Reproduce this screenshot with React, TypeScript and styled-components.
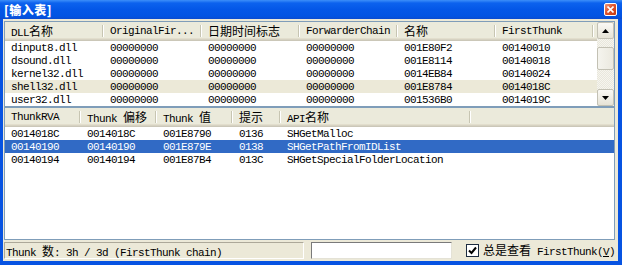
import React from 'react';
import styled, { createGlobalStyle } from 'styled-components';

const GlobalStyle = createGlobalStyle`
  html, body {
    margin: 0;
    padding: 0;
    background: #fff;
  }
  body {
    font-family: "Liberation Mono", "DejaVu Sans Mono", monospace;
    font-size: 11px;
    letter-spacing: -0.6px;
    color: #000;
  }
`;

const Window = styled.div`
  width: 622px;
  height: 265px;
  display: flex;
  flex-direction: column;
  background: #0753e2;
  overflow: hidden;
`;

const TitleBar = styled.div`
  height: 19px;
  flex: none;
  display: flex;
  align-items: center;
  justify-content: space-between;
  padding: 0 5px 0 4px;
  background: linear-gradient(
    to bottom,
    #3d8ff9 0%,
    #0c62ee 16%,
    #0457e7 50%,
    #0254e3 85%,
    #0a4bd0 100%
  );
`;

const Title = styled.span`
  font-family: "Noto Sans CJK SC", sans-serif;
  font-weight: 900;
  font-size: 12px;
  letter-spacing: 0.5px;
  color: #fff;
  line-height: 19px;
`;

const CloseButton = styled.div`
  width: 13px;
  height: 13px;
  box-sizing: border-box;
  border: 1px solid #fff;
  border-radius: 2px;
  background: linear-gradient(135deg, #f19a7c 0%, #e0542d 45%, #c43a12 100%);
  display: flex;
  align-items: center;
  justify-content: center;
`;

const Client = styled.div`
  flex: 1;
  min-height: 0;
  margin: 0 4px 4px 3px;
  padding: 2px 3px 0 1px;
  background: #ece9d8;
  display: flex;
  flex-direction: column;
`;

const Pane = styled.div<{ $height?: number }>`
  box-sizing: border-box;
  border: 1px solid #7f9db9;
  background: #fff;
  display: flex;
  ${p => (p.$height ? `height: ${p.$height}px; flex: none;` : 'flex: 1; min-height: 0;')}
`;

const ListArea = styled.div`
  flex: 1;
  min-width: 0;
  display: flex;
  flex-direction: column;
  overflow: hidden;
`;

const HeaderRow = styled.div<{ $cols: string }>`
  display: grid;
  grid-template-columns: ${p => p.$cols};
  height: 19px;
  flex: none;
  background: #ebeadb;
  box-shadow: inset 0 -1px #cbc7b8, inset 0 -2px #d6d2c2, inset 0 -3px #e2decd;
`;

const HeaderCell = styled.div<{ $sep?: boolean }>`
  padding-left: 6px;
  line-height: 18px;
  white-space: nowrap;
  overflow: hidden;
  background: ${p =>
    p.$sep
      ? 'linear-gradient(#c7c5b2, #c7c5b2) right 1px top 3px / 1px 12px no-repeat, linear-gradient(#fff, #fff) right 0 top 3px / 1px 12px no-repeat'
      : 'none'};
`;

const Row = styled.div<{ $cols: string; $sel?: 'focus' | 'dim' }>`
  display: grid;
  grid-template-columns: ${p => p.$cols};
  height: 13px;
  line-height: 15px;
  overflow: hidden;
  flex: none;
  background: ${p =>
    p.$sel === 'focus' ? '#316ac5' : p.$sel === 'dim' ? '#ece9d8' : 'transparent'};
  color: ${p => (p.$sel === 'focus' ? '#fff' : '#000')};
`;

const Cell = styled.div`
  padding-left: 6px;
  white-space: nowrap;
  overflow: hidden;
`;

const Han = styled.span`
  font-family: "Noto Sans CJK SC", sans-serif;
  font-size: 12px;
  letter-spacing: 0;
`;

const ScrollBar = styled.div`
  width: 17px;
  flex: none;
  display: flex;
  flex-direction: column;
  background: #f1efe6;
  background-image: repeating-conic-gradient(#f6f5ef 0 25%, #e9e7dc 0 50%);
  background-size: 2px 2px;
`;

const ScrollButton = styled.div`
  width: 17px;
  height: 17px;
  flex: none;
  box-sizing: border-box;
  border: 1px solid #c3c1b4;
  border-radius: 2px;
  background: linear-gradient(to bottom, #faf9f5, #e6e3d6);
  display: flex;
  align-items: center;
  justify-content: center;
`;

const Track = styled.div`
  flex: 1;
  padding-top: 8px;
`;

const Thumb = styled.div`
  height: 23px;
  box-sizing: border-box;
  border: 1px solid #c3c1b4;
  border-radius: 2px;
  background: linear-gradient(to right, #f5f4ee, #ebe9df);
`;

const StatusBar = styled.div`
  height: 21px;
  flex: none;
  display: flex;
  align-items: center;
`;

const StatusPanel = styled.div`
  width: 304px;
  height: 17px;
  box-sizing: border-box;
  border-top: 1px solid #aca899;
  border-left: 1px solid #aca899;
  border-right: 1px solid #fff;
  border-bottom: 1px solid #fff;
  padding-left: 1px;
  line-height: 16px;
  white-space: nowrap;
`;

const TextBox = styled.div`
  width: 143px;
  height: 17px;
  margin-left: 7px;
  box-sizing: border-box;
  background: #fff;
  border-top: 1px solid #7a7a7a;
  border-left: 1px solid #7a7a7a;
  border-right: 1px solid #e4e2d6;
  border-bottom: 1px solid #e4e2d6;
`;

const CheckBox = styled.div`
  width: 13px;
  height: 13px;
  margin-left: 14px;
  box-sizing: border-box;
  border: 1px solid #1c2b40;
  background: #fff;
  display: flex;
  align-items: center;
  justify-content: center;
`;

const CheckLabel = styled.span`
  margin-left: 4px;
  white-space: nowrap;
  line-height: 16px;
`;

const Hotkey = styled.span`
  text-decoration: underline;
`;

const HAN = /([\u3400-\u9fff]+)/;

const Txt = ({ s }: { s: string }) => (
  <>{s.split(HAN).map((part, i) => (i % 2 ? <Han key={i}>{part}</Han> : part))}</>
);

const Arrow = ({ up }: { up?: boolean }) => (
  <svg width="7" height="4" viewBox="0 0 7 4">
    <path d={up ? 'M0 4 L3.5 0 L7 4 Z' : 'M0 0 L7 0 L3.5 4 Z'} fill="#000" />
  </svg>
);

const TOP_COLS = '99px 98px 98px 98px 98px 98px 1fr';
const BOTTOM_COLS = '76px 76px 76px 48px 190px 1fr';

const dlls: { cells: string[]; sel?: 'dim' }[] = [
  { cells: ['dinput8.dll', '00000000', '00000000', '00000000', '001E80F2', '00140010'] },
  { cells: ['dsound.dll', '00000000', '00000000', '00000000', '001E8114', '00140018'] },
  { cells: ['kernel32.dll', '00000000', '00000000', '00000000', '0014EB84', '00140024'] },
  { cells: ['shell32.dll', '00000000', '00000000', '00000000', '001E8784', '0014018C'], sel: 'dim' },
  { cells: ['user32.dll', '00000000', '00000000', '00000000', '001536B0', '0014019C'] },
];

const thunks: { cells: string[]; sel?: 'focus' }[] = [
  { cells: ['0014018C', '0014018C', '001E8790', '0136', 'SHGetMalloc'] },
  { cells: ['00140190', '00140190', '001E879E', '0138', 'SHGetPathFromIDList'], sel: 'focus' },
  { cells: ['00140194', '00140194', '001E87B4', '013C', 'SHGetSpecialFolderLocation'] },
];

const topHeaders = ['DLL名称', 'OriginalFir...', '日期时间标志', 'ForwarderChain', '名称', 'FirstThunk'];
const bottomHeaders = ['ThunkRVA', 'Thunk 偏移', 'Thunk 值', '提示', 'API名称'];

export default function App() {
  return (
    <>
      <GlobalStyle />
      <Window>
        <TitleBar>
          <Title>[输入表]</Title>
          <CloseButton>
            <svg width="7" height="7" viewBox="0 0 7 7">
              <path d="M0.5 0.5 L6.5 6.5 M6.5 0.5 L0.5 6.5" stroke="#fff" strokeWidth="1.6" />
            </svg>
          </CloseButton>
        </TitleBar>
        <Client>
          <Pane $height={86}>
            <ListArea>
              <HeaderRow $cols={TOP_COLS}>
                {topHeaders.map(h => (
                  <HeaderCell key={h} $sep>
                    <Txt s={h} />
                  </HeaderCell>
                ))}
                <HeaderCell />
              </HeaderRow>
              {dlls.map(r => (
                <Row key={r.cells[0]} $cols={TOP_COLS} $sel={r.sel}>
                  {r.cells.map((c, i) => (
                    <Cell key={i}>{c}</Cell>
                  ))}
                </Row>
              ))}
            </ListArea>
            <ScrollBar>
              <ScrollButton>
                <Arrow up />
              </ScrollButton>
              <Track>
                <Thumb />
              </Track>
              <ScrollButton>
                <Arrow />
              </ScrollButton>
            </ScrollBar>
          </Pane>
          <Pane>
            <ListArea>
              <HeaderRow $cols={BOTTOM_COLS}>
                {bottomHeaders.map(h => (
                  <HeaderCell key={h} $sep>
                    <Txt s={h} />
                  </HeaderCell>
                ))}
                <HeaderCell />
              </HeaderRow>
              {thunks.map(r => (
                <Row key={r.cells[0]} $cols={BOTTOM_COLS} $sel={r.sel}>
                  {r.cells.map((c, i) => (
                    <Cell key={i}>{c}</Cell>
                  ))}
                </Row>
              ))}
            </ListArea>
          </Pane>
          <StatusBar>
            <StatusPanel>
              <Txt s="Thunk 数: 3h / 3d (FirstThunk chain)" />
            </StatusPanel>
            <TextBox />
            <CheckBox>
              <svg width="9" height="9" viewBox="0 0 9 9">
                <path d="M1 4.5 L3.5 7 L8 1.5" fill="none" stroke="#000" strokeWidth="2" />
              </svg>
            </CheckBox>
            <CheckLabel>
              <Txt s="总是查看 " />
              FirstThunk(<Hotkey>V</Hotkey>)
            </CheckLabel>
          </StatusBar>
        </Client>
      </Window>
    </>
  );
}
